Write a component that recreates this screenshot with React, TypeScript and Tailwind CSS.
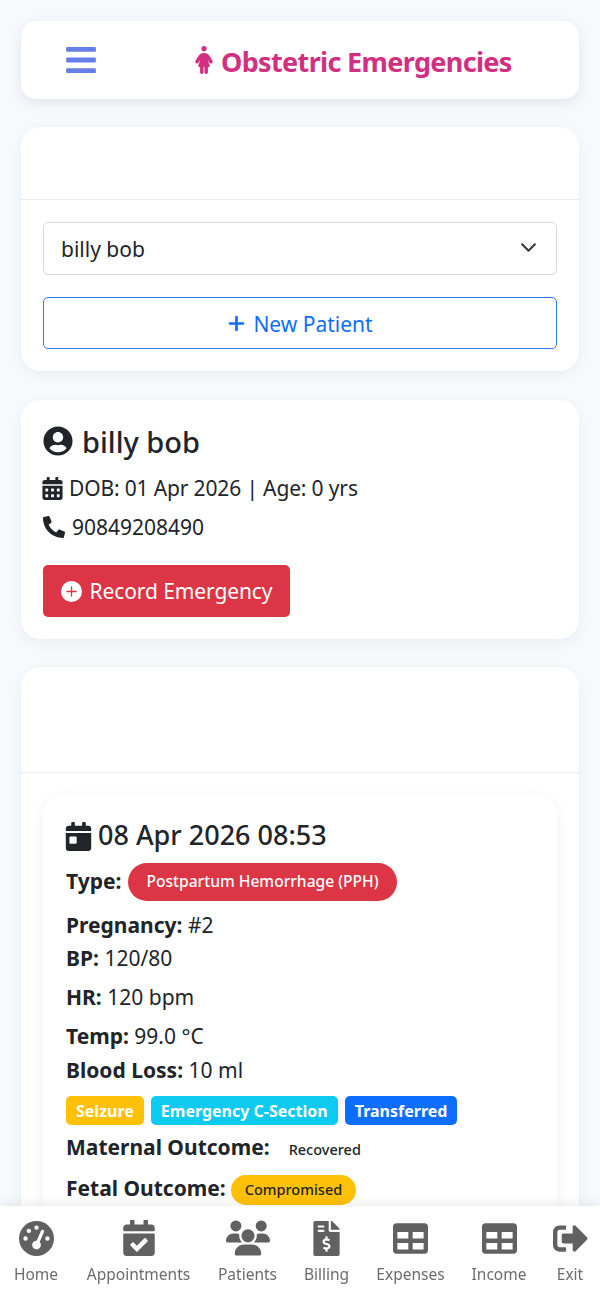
import React from 'react';
import { FaBars, FaUserCircle, FaCalendarAlt, FaPhoneAlt, FaCalendarDay, FaCalendarCheck, FaFileInvoiceDollar, FaTable, FaSignOutAlt } from 'react-icons/fa';
import { FaPersonDress, FaGaugeHigh, FaUsers } from 'react-icons/fa6';
import { BsPlusCircleFill, BsPlusLg } from 'react-icons/bs';

const cardClass = 'rounded-[20px] bg-white shadow-[0_4px_14px_rgba(15,23,42,0.05)]';

const navItems = [
  { label: 'Home', width: 'w-[72px]', icon: <FaGaugeHigh size={35} /> },
  { label: 'Appointments', width: 'w-[133px]', icon: <FaCalendarCheck size={36} /> },
  { label: 'Patients', width: 'w-[85px]', icon: <FaUsers size={44} /> },
  { label: 'Billing', width: 'w-[73px]', icon: <FaFileInvoiceDollar size={35} /> },
  { label: 'Expenses', width: 'w-[95px]', icon: <FaTable size={35} /> },
  { label: 'Income', width: 'w-[82px]', icon: <FaTable size={35} /> },
  { label: 'Exit', width: 'w-[60px]', icon: <FaSignOutAlt size={35} /> },
];

const Vital = ({ label, value, className }: { label: string; value: string; className: string }) => (
  <p className={className}>
    <strong className="font-bold">{label}</strong> {value}
  </p>
);

export default function App() {
  return (
    <div className="h-[1300px] overflow-hidden bg-[#f7fafd] px-[21px] pt-[21px] font-['Noto_Sans',sans-serif] text-[#212529]">
      <header className="flex h-[78px] items-center rounded-[15px] bg-white pl-[43px] shadow-[0_4px_14px_rgba(15,23,42,0.09)]">
        <FaBars size={34} className="text-[#667eea]" />
        <h1 className="ml-[92px] flex items-center gap-[3px] text-[27px] font-bold tracking-[-0.65px] text-[#d32f82]">
          <FaPersonDress size={28} />
          <span className="mt-[4px]">Obstetric Emergencies</span>
        </h1>
      </header>

      <section className={`${cardClass} mt-[28px]`}>
        <div className="h-[73px] border-b border-[#ececec]" />
        <div className="px-[22px] pt-[22px] pb-[22px]">
          <div className="flex h-[53px] items-center justify-between rounded-[5px] border-[1.5px] border-[#d5d8dc] pr-[19px] pl-[17px] text-[21px]">
            <span className="mt-[3px]">billy bob</span>
            <svg viewBox="0 0 16 16" className="mt-[-3px] h-[17px] w-[17px] fill-none stroke-[#343a40] stroke-2">
              <path d="M2 5l6 6 6-6" strokeLinecap="round" strokeLinejoin="round" />
            </svg>
          </div>
          <button className="mt-[22px] flex h-[52px] w-full items-center justify-center gap-[7px] rounded-[5px] border border-[#2f7ae5] text-[21px] text-[#0d6efd]">
            <BsPlusLg size={19} className="stroke-[1.2px]" />
            <span className="mt-[3px]">New Patient</span>
          </button>
        </div>
      </section>

      <section className={`${cardClass} mt-[29px] h-[239px] px-[22px] pt-[22px]`}>
        <h2 className="flex h-[38px] items-center gap-[9px] text-[29px] font-medium">
          <FaUserCircle size={30} />
          <span className="mt-[1px]">billy bob</span>
        </h2>
        <p className="mt-[13px] flex items-center gap-[5px] text-[21px] leading-[30px] tracking-[-0.15px]">
          <FaCalendarAlt size={23} className="ml-[-2px]" />
          DOB: 01 Apr 2026 | Age: 0 yrs
        </p>
        <p className="mt-[9px] flex items-center gap-[7px] text-[21px] leading-[30px]">
          <FaPhoneAlt size={22} />
          90849208490
        </p>
        <button className="mt-[23px] flex h-[52px] w-[247px] items-center justify-center gap-[8px] rounded-[5px] bg-[#dc3545] text-[21px] tracking-[-0.1px] text-white">
          <BsPlusCircleFill size={21} />
          <span className="mt-[1px]">Record Emergency</span>
        </button>
      </section>

      <section className={`${cardClass} mt-[28px] h-[700px]`}>
        <div className="h-[106px] border-b border-[#ececec]" />
        <div className="px-[22px] pt-[22px]">
          <article className="h-[500px] rounded-[20px] bg-white px-[23px] pt-[22px] shadow-[0_2px_14px_rgba(15,23,42,0.05)]">
            <h3 className="flex h-[38px] items-center gap-[5px] text-[27px] font-medium">
              <FaCalendarDay size={29} className="ml-[-2px]" />
              <span className="mt-[-1px]">08 Apr 2026 08:53</span>
            </h3>
            <div className="mt-[7px] flex h-[39px] items-center gap-[7px] text-[21px]">
              <strong className="font-bold">Type:</strong>
              <span className="flex h-[38px] items-center rounded-full bg-[#dc3545] px-[18px] text-[15.6px] font-medium text-white">
                Postpartum Hemorrhage (PPH)
              </span>
            </div>
            <Vital label="Pregnancy:" value="#2" className="mt-[9px] text-[21px] leading-[30px]" />
            <Vital label="BP:" value="120/80" className="mt-[3px] text-[21px] leading-[30px]" />
            <Vital label="HR:" value="120 bpm" className="mt-[9px] text-[21px] leading-[30px]" />
            <Vital label="Temp:" value="99.0 °C" className="mt-[9px] text-[21px] leading-[30px]" />
            <Vital label="Blood Loss:" value="10 ml" className="mt-[4px] text-[21px] leading-[30px]" />
            <div className="mt-[11px] flex gap-[7px] text-[16px] font-bold text-white">
              <span className="flex h-[29px] items-center rounded-[5px] bg-[#ffc107] px-[10px]">Seizure</span>
              <span className="flex h-[29px] items-center rounded-[5px] bg-[#0dcaf0] px-[10px]">Emergency C-Section</span>
              <span className="flex h-[29px] items-center rounded-[5px] bg-[#0d6efd] px-[10px]">Transferred</span>
            </div>
            <div className="mt-[7px] flex h-[32px] items-center text-[21px]">
              <strong className="font-bold">Maternal Outcome:</strong>
              <span className="mt-[4px] ml-[19px] text-[14.5px] font-medium">Recovered</span>
            </div>
            <div className="mt-[9px] flex h-[32px] items-center gap-[5px] text-[21px]">
              <strong className="font-bold">Fetal Outcome:</strong>
              <span className="mt-[2px] flex h-[30px] items-center rounded-full bg-[#ffc107] px-[14px] text-[14.5px] font-medium">
                Compromised
              </span>
            </div>
          </article>
        </div>
      </section>

      <nav className="fixed right-0 bottom-0 left-0 flex h-[94px] overflow-hidden bg-white shadow-[0_-2px_10px_rgba(0,0,0,0.08)]">
        {navItems.map((item) => (
          <div key={item.label} className={`${item.width} flex shrink-0 flex-col items-center pt-[13px] text-[#6c6c6c]`}>
            <div className="flex h-[38px] items-center justify-center text-[#616161]">{item.icon}</div>
            <span className="mt-[5px] text-[15.5px] leading-[24px]">{item.label}</span>
          </div>
        ))}
      </nav>
    </div>
  );
}
